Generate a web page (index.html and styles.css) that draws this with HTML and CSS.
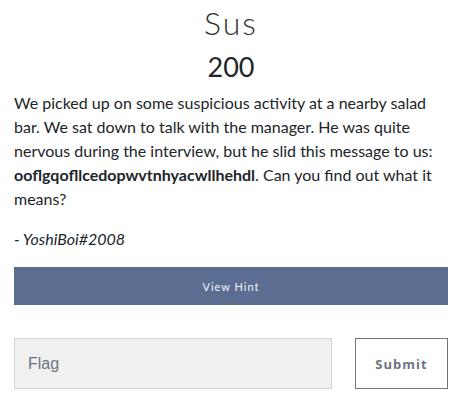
FILE: index.html
```html
<!DOCTYPE html>
<html>
<head>
<meta charset="utf-8">
<link rel="stylesheet" href="styles.css">
</head>
<body>
<div class="challenge">
  <h3 class="challenge-name">Sus</h3>
  <h4 class="challenge-value">200</h4>
  <div class="challenge-desc">
    <p>We picked up on some suspicious activity at a nearby salad bar. We sat down to talk with the manager. He was quite nervous during the interview, but he slid this message to us: <strong>ooflgqofllcedopwvtnhyacwllhehdl</strong>. Can you find out what it means?</p>
    <p><em>- YoshiBoi#2008</em></p>
  </div>
  <button class="hint-btn">View Hint</button>
  <form class="flag-row">
    <input class="flag-input" type="text" placeholder="Flag">
    <button class="submit-btn" type="button">Submit</button>
  </form>
</div>
</body>
</html>
```
FILE: styles.css
```css
html, body {
  margin: 0;
  padding: 0;
  background: #fff;
}
body {
  font-family: Lato, "Open Sans", sans-serif;
  color: #212529;
}
.challenge {
  padding: 0 13px 0 14px;
}
.challenge-name {
  margin: 0;
  padding-top: 3px;
  font-family: Lato, sans-serif;
  font-weight: 300;
  font-size: 32px;
  letter-spacing: 2px;
  line-height: 40px;
  text-align: center;
  color: #333;
}
.challenge-value {
  margin: 4px 0 0;
  font-weight: 400;
  font-size: 27px;
  line-height: 40px;
  text-align: center;
  color: #212529;
}
.challenge-desc {
  margin-top: 4px;
  font-size: 16px;
  line-height: 24px;
}
.challenge-desc p {
  margin: 0 0 16px;
}
.hint-btn {
  display: block;
  width: 100%;
  height: 38px;
  margin-top: 5px;
  border: none;
  background: #5b6d91;
  color: #f4f6fa;
  font-family: Lato, sans-serif;
  font-size: 11px;
  letter-spacing: 1px;
  cursor: pointer;
}
.flag-row {
  display: flex;
  gap: 23px;
  margin-top: 33px;
}
.flag-input {
  flex: 1;
  height: 51px;
  box-sizing: border-box;
  border: 1px solid #d0d6de;
  background: #f0f0f0;
  padding: 0 13px;
  font-family: "Liberation Sans", Arial, sans-serif;
  font-size: 16px;
  color: #495057;
  margin: 0;
}
.flag-input::placeholder {
  color: #6c757d;
}
.submit-btn {
  width: 93px;
  height: 51px;
  box-sizing: border-box;
  border: 1px solid #6c757d;
  background: #fff;
  color: #6c757d;
  font-family: "Open Sans", sans-serif;
  font-weight: 700;
  font-size: 13px;
  letter-spacing: 1px;
  margin: 0;
}
```
